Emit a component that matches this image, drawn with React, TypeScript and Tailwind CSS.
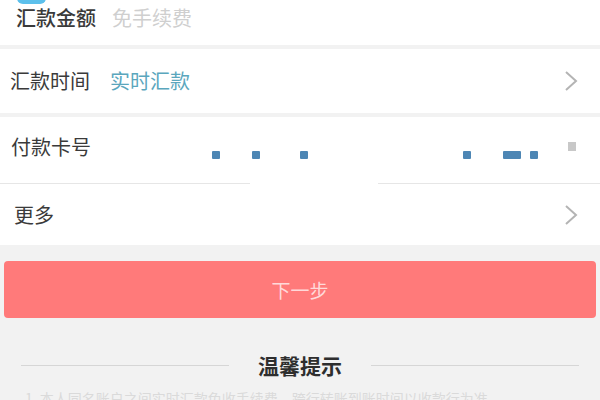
import React from "react";

const Chevron = () => (
  <svg width="14" height="22" viewBox="0 0 14 22" className="block">
    <polyline points="2,2 12,11 2,20" fill="none" stroke="#b4b4b4" strokeWidth="2" strokeLinejoin="miter" />
  </svg>
);

const Dot = ({ w = 8, c = "#4d86b4" }: { w?: number; c?: string }) => (
  <span className="block h-[8px] rounded-[1px] shrink-0" style={{ width: w, background: c }} />
);

export default function App() {
  return (
    <div
      className="w-[600px] h-[400px] overflow-hidden bg-[#f2f2f2] text-[#333]"
      style={{ fontFamily: '"Noto Sans CJK SC", "Noto Sans", sans-serif' }}
    >
      {/* row 1 */}
      <div className="relative h-[45px] bg-white flex items-start pt-[6px] pl-[16px]">
        <span className="absolute left-[17px] top-[-10px] w-[29px] h-[14px] rounded-[6px] bg-[#5cc0ec]" />
        <span className="text-[20px] leading-[24px] font-medium text-[#3a3a3a]">汇款金额</span>
        <span className="ml-[16px] text-[20px] leading-[24px] text-[#cfcfcf]">免手续费</span>
      </div>

      {/* row 2 */}
      <div className="mt-[4px] h-[64px] bg-white flex items-center pl-[10px] pr-[22px]">
        <span className="text-[20px] leading-[24px] text-[#3a3a3a]">汇款时间</span>
        <span className="ml-[20px] text-[20px] leading-[24px] text-[#5aa6bd]">实时汇款</span>
        <span className="ml-auto">
          <Chevron />
        </span>
      </div>

      {/* row 3 */}
      <div className="mt-[4px] h-[66px] bg-white flex items-start pt-[17px] pl-[11px] relative">
        <span className="text-[20px] leading-[26px] text-[#3a3a3a]">付款卡号</span>
        <div className="absolute left-[212px] top-[34px] flex items-center gap-[32px]">
          <Dot />
          <Dot />
          <span className="w-[10px]" />
        </div>
        <div className="absolute left-[300px] top-[34px]">
          <Dot />
        </div>
        <div className="absolute left-[463px] top-[34px] flex items-center gap-[32px]">
          <Dot />
          <div className="flex items-center gap-[9px]">
            <Dot w={18} />
            <Dot />
          </div>
        </div>
        <span className="absolute left-[568px] top-[25px] w-[8px] h-[9px] bg-[#c8c8c8]" />
      </div>
      <div className="h-[1px] bg-white flex">
        <div className="w-[250px] bg-[#e6e6e6]" />
        <div className="w-[128px]" />
        <div className="flex-1 bg-[#e6e6e6]" />
      </div>

      {/* row 4 */}
      <div className="h-[61px] bg-white flex items-center pl-[14px] pr-[22px]">
        <span className="text-[20px] leading-[24px] text-[#3a3a3a]">更多</span>
        <span className="ml-auto">
          <Chevron />
        </span>
      </div>

      {/* button */}
      <div className="mt-[16px] mx-[4px] h-[57px] rounded-[4px] bg-[#ff7a7a] flex items-center justify-center">
        <span className="text-[19px] leading-[24px] text-[#ffd9d9]">下一步</span>
      </div>

      {/* tips */}
      <div className="mt-[33px] flex items-center px-[21px]">
        <div className="flex-1 h-[1px] bg-[#d6d6d6]" />
        <span className="mx-[29px] text-[21px] leading-[28px] font-bold text-[#2e2e2e]">温馨提示</span>
        <div className="flex-1 h-[1px] bg-[#d6d6d6]" />
      </div>
      <div className="mt-[9px] px-[25px] text-[14px] leading-[20px] text-[#dadada] whitespace-nowrap overflow-hidden">
        1. 本人同名账户之间实时汇款免收手续费，跨行转账到账时间以收款行为准。
      </div>
    </div>
  );
}
